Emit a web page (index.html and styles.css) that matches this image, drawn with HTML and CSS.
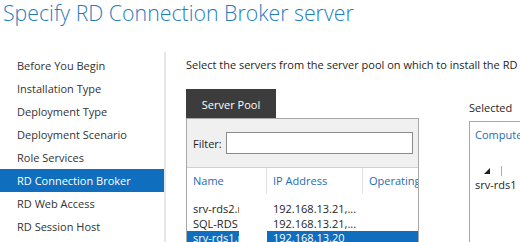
FILE: index.html
```html
<!DOCTYPE html>
<html lang="en">
<head>
    <meta charset="UTF-8">
    <title>Specify RD Connection Broker server</title>
    <link rel="stylesheet" href="styles.css">
</head>
<body>
    <div class="page">
        <div class="title">Specify RD Connection Broker server</div>

        <div class="wizard">
            <div class="nav">
                <div class="nav-item">Before You Begin</div>
                <div class="nav-item">Installation Type</div>
                <div class="nav-item">Deployment Type</div>
                <div class="nav-item">Deployment Scenario</div>
                <div class="nav-item">Role Services</div>
                <div class="nav-item active">RD Connection Broker</div>
                <div class="nav-item">RD Web Access</div>
                <div class="nav-item">RD Session Host</div>
            </div>

            <div class="main">
                <div class="intro">Select the servers from the server pool on which to install the RD Connection Broker role service.</div>

                <div class="pools">
                    <div class="pool">
                        <div class="tab-row">
                            <div class="tab">Server Pool</div>
                        </div>
                        <div class="pool-box">
                            <div class="filter">
                                <span class="filter-label">Filter:</span>
                                <div class="filter-input"></div>
                            </div>
                            <div class="grid">
                                <div class="grid-head">
                                    <div class="col col-name">Name</div>
                                    <div class="col col-ip">IP Address</div>
                                    <div class="col col-os">Operating System</div>
                                </div>
                                <div class="grid-body">
                                    <div class="grid-row">
                                        <div class="cell cell-name">srv-rds2.rds.local</div>
                                        <div class="cell cell-ip">192.168.13.21,...</div>
                                    </div>
                                    <div class="grid-row">
                                        <div class="cell cell-name">SQL-RDS</div>
                                        <div class="cell cell-ip">192.168.13.21,...</div>
                                    </div>
                                    <div class="grid-row selected">
                                        <div class="cell cell-name">srv-rds1.rds.local</div>
                                        <div class="cell cell-ip">192.168.13.20</div>
                                    </div>
                                </div>
                            </div>
                        </div>
                    </div>

                    <div class="gutter">
                        <div class="move-btn"></div>
                    </div>

                    <div class="selected-pane">
                        <div class="selected-label">Selected</div>
                        <div class="selected-box">
                            <div class="sel-head">Computer</div>
                            <div class="sel-group">
                                <span class="expander"></span>
                                <span class="caret"></span>
                            </div>
                            <div class="sel-item">srv-rds1</div>
                        </div>
                    </div>
                </div>
            </div>
        </div>
    </div>
</body>
</html>
```

FILE: styles.css
```css
* {
    margin: 0;
    padding: 0;
    box-sizing: border-box;
}

body {
    font-family: 'Open Sans', 'Noto Sans', sans-serif;
    font-size: 11px;
    color: #1e1e1e;
    background: #ffffff;
    width: 520px;
    height: 242px;
    overflow: hidden;
}

.page {
    width: 520px;
    height: 242px;
    overflow: hidden;
}

.title {
    height: 52px;
    padding: 0 0 0 3px;
    font-size: 21.3px;
    font-weight: 300;
    line-height: 26px;
    color: #1f7cbd;
    white-space: nowrap;
}

.wizard {
    display: flex;
    height: 190px;
}

.nav {
    width: 166px;
    flex-shrink: 0;
    border-right: 2px solid #e6e6e6;
    padding-top: 2px;
}

.nav-item {
    height: 23px;
    line-height: 23px;
    padding-left: 17px;
    color: #333333;
    white-space: nowrap;
}

.nav-item.active {
    background: #0f6ebd;
    color: #ffffff;
}

.main {
    flex: 1;
    padding-left: 20px;
    overflow: hidden;
}

.intro {
    height: 37px;
    line-height: 26px;
    white-space: nowrap;
    overflow: hidden;
}

.pools {
    display: flex;
}

.pool {
    width: 233px;
    flex-shrink: 0;
}

.tab-row {
    height: 29px;
}

.tab {
    width: 90px;
    height: 29px;
    line-height: 32px;
    background: #3c3c3c;
    color: #ffffff;
    text-align: center;
}

.pool-box {
    border-left: 1px solid #a8a8a8;
    border-right: 1px solid #a8a8a8;
    height: 130px;
}

.filter {
    display: flex;
    align-items: center;
    gap: 4px;
    height: 50px;
    padding: 0 5px 0 6px;
    background: #f0f0f0;
    border-top: 1px solid #a8a8a8;
    border-bottom: 1px solid #d0d0d0;
}

.filter-input {
    flex: 1;
    height: 22px;
    background: #ffffff;
    border: 1px solid #8a8a8a;
}

.grid {
    background: #ffffff;
}

.grid-head {
    display: flex;
    height: 26px;
}

.col {
    color: #1e6cb3;
    line-height: 26px;
    padding-left: 6px;
    border-right: 1px solid #e2e2e2;
    white-space: nowrap;
    overflow: hidden;
}

.col-name {
    width: 80px;
}

.col-ip {
    width: 96px;
}

.col-os {
    flex: 1;
    border-right: none;
}

.grid-body {
    padding-top: 8px;
}

.grid-row {
    display: flex;
    height: 14.5px;
    line-height: 14.5px;
}

.cell {
    white-space: nowrap;
    overflow: hidden;
}

.cell-name {
    width: 52px;
    margin-right: 28px;
    padding-left: 6px;
}

.cell-ip {
    flex: 1;
    padding-left: 6px;
}

.grid-row.selected .cell {
    background: #0f6ebd;
    color: #ffffff;
}

.gutter {
    width: 50px;
    flex-shrink: 0;
    display: flex;
    flex-direction: column;
    justify-content: flex-end;
    padding-left: 26px;
}

.move-btn {
    width: 14px;
    height: 14px;
    background: #e1e1e1;
    border: 1px solid #a0a0a0;
    margin-bottom: -1px;
}

.selected-pane {
    flex: 1;
}

.selected-label {
    height: 32px;
    line-height: 18px;
    padding-top: 10px;
    white-space: nowrap;
}

.selected-box {
    border: 1px solid #a8a8a8;
    border-right: none;
    height: 140px;
    padding: 4px 0 0 5px;
    white-space: nowrap;
    overflow: hidden;
}

.sel-head {
    color: #1e6cb3;
    line-height: 18px;
}

.sel-group {
    display: flex;
    align-items: center;
    height: 12px;
    margin-top: 21px;
    padding-left: 9px;
}

.expander {
    width: 0;
    height: 0;
    border-left: 6px solid transparent;
    border-bottom: 6px solid #1e1e1e;
}

.caret {
    width: 1px;
    height: 10px;
    background: #d8a070;
    margin-left: 11px;
}

.sel-item {
    line-height: 16px;
}
```
